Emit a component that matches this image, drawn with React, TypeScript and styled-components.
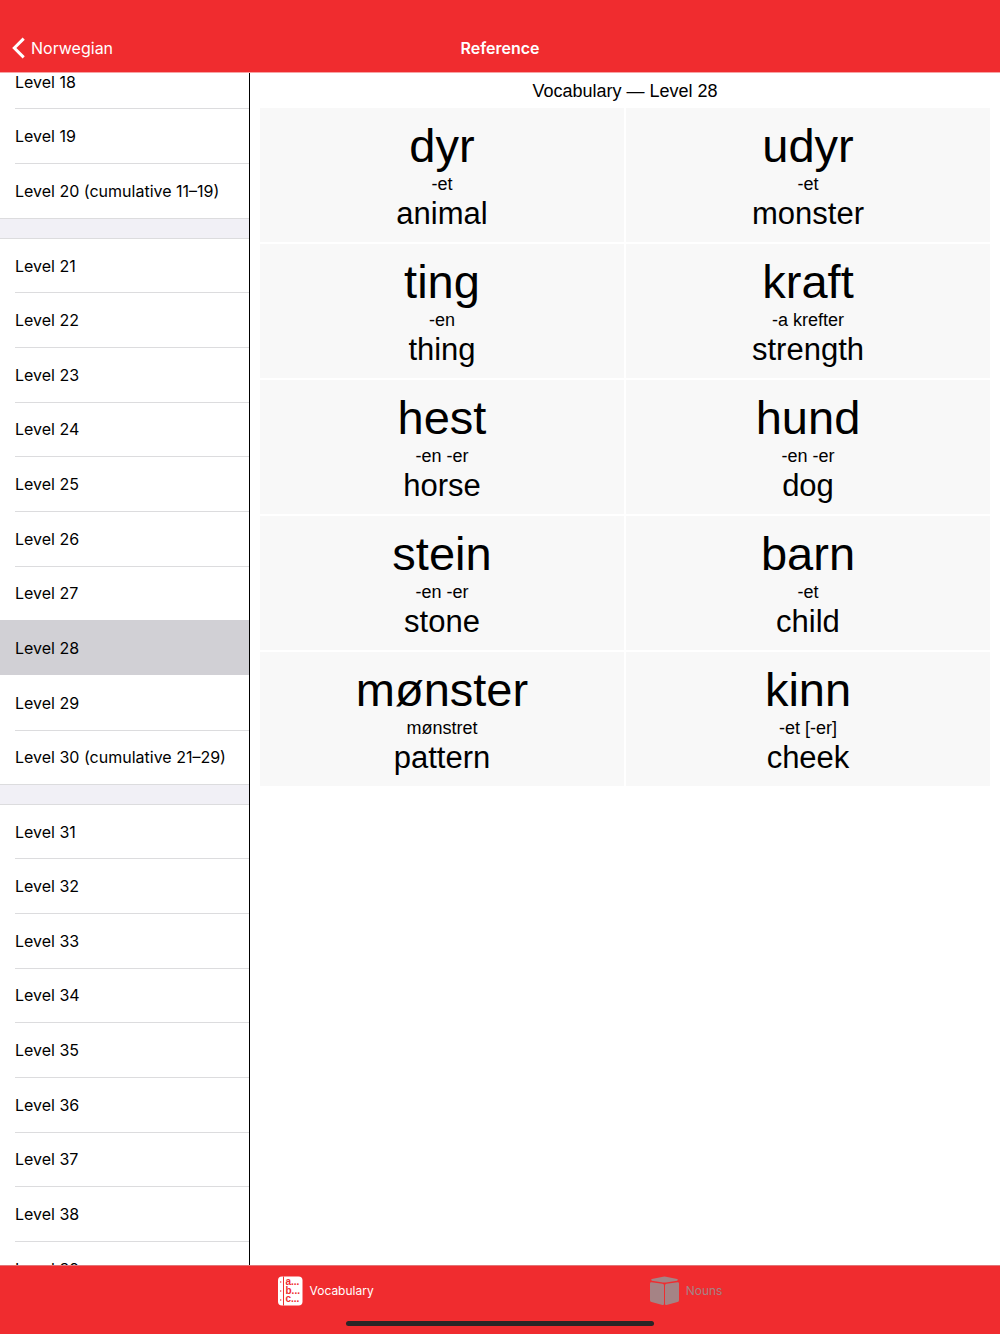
import React, { useLayoutEffect, useRef, useState } from 'react';
import styled, { createGlobalStyle } from 'styled-components';

const GlobalStyle = createGlobalStyle`
  *, *::before, *::after { box-sizing: border-box; }
  body { margin: 0; background: #fff; color: #000; }
`;

const uiFont = 'Inter, "Liberation Sans", sans-serif';
const wordFont = '"Liberation Sans", Arial, sans-serif';
const red = '#f02c2f';
const line = '#dcdcde';

const Page = styled.div`
  display: flex;
  flex-direction: column;
  height: 100vh;
  font-family: ${uiFont};
`;

const TopBar = styled.header`
  display: grid;
  grid-template-columns: 1fr auto 1fr;
  align-items: center;
  flex: none;
  padding: 24px 12px 0;
  height: 72px;
  background: ${red};
  color: #fff;
`;

const BackLink = styled.a`
  display: flex;
  align-items: center;
  gap: 6px;
  justify-self: start;
  color: inherit;
  font-size: 16px;
  line-height: 24px;
  text-decoration: none;
`;

const Title = styled.h1`
  margin: 0;
  font-size: 16px;
  font-weight: 600;
  line-height: 24px;
`;

const Body = styled.div`
  display: flex;
  flex: 1;
  min-height: 0;
  border-top: 1px solid #f8a3a4;
`;

const Sidebar = styled.nav`
  flex: none;
  width: 25%;
  overflow-y: auto;
  scrollbar-width: none;
  border-right: 1px solid #000;
`;

const LevelGroup = styled.ul`
  margin: 0;
  padding: 0;
  list-style: none;

  & + & {
    padding-top: 19px;
    border-top: 1px solid ${line};
    background: #f1f0f6;
  }
`;

const LevelItem = styled.li`
  height: 55px;

  &:nth-child(3n + 1) {
    height: 54px;
  }

  &:first-child {
    border-top: 1px solid ${line};
  }
`;

const LevelButton = styled.button<{ $selected: boolean }>`
  display: flex;
  width: 100%;
  height: 100%;
  padding: 0 0 0 15px;
  border: 0;
  background: ${(p) => (p.$selected ? '#d1d0d5' : '#fff')};
  color: #000;
  font-family: inherit;
  font-size: 16px;
  line-height: 24px;
  text-align: left;
  cursor: pointer;
`;

const LevelLabel = styled.span<{ $line: boolean }>`
  display: flex;
  align-items: center;
  flex: 1;
  padding-bottom: 1px;
  border-top: 1px solid ${(p) => (p.$line ? line : 'transparent')};
`;

const Content = styled.main`
  flex: 1;
  min-width: 0;
  overflow-y: auto;
  padding: 0 10px;
  font-family: ${wordFont};
  text-align: center;
`;

const Heading = styled.h2`
  margin: 0;
  padding-top: 1px;
  font-size: 18px;
  font-weight: 400;
  line-height: 34px;
`;

const WordGrid = styled.div`
  display: grid;
  grid-template-columns: 1fr 1fr;
  gap: 2px;
`;

const Card = styled.article`
  padding: 10px;
  background: #f8f8f8;
`;

const Word = styled.h3`
  margin: 0;
  font-size: 47px;
  font-weight: 400;
  line-height: 55px;
`;

const Inflection = styled.p`
  margin: 0;
  font-size: 18px;
  line-height: 22px;
`;

const Meaning = styled.p`
  margin: 0;
  font-size: 31px;
  line-height: 37px;
`;

const TabBar = styled.footer`
  display: flex;
  flex-direction: column;
  align-items: center;
  justify-content: space-between;
  flex: none;
  height: 69px;
  padding: 9px 0 8px;
  border-top: 1px solid #e27477;
  background: ${red};
`;

const Tabs = styled.nav`
  display: flex;
  gap: 276px;
`;

const Tab = styled.button<{ $active: boolean }>`
  display: flex;
  align-items: center;
  gap: 7px;
  padding: 0;
  border: 0;
  background: none;
  color: ${(p) => (p.$active ? '#fff' : '#a58385')};
  font-family: inherit;
  font-size: 12px;
  line-height: 32px;
  cursor: pointer;
`;

const HomeIndicator = styled.div`
  width: 308px;
  height: 5px;
  border-radius: 3px;
  background: #2a2526;
`;

const BackIcon = () => (
  <svg width="13" height="22" viewBox="0 0 13 22" fill="none" stroke="currentColor" strokeWidth="3" aria-hidden="true">
    <path d="M11.7 1.6 2.3 11l9.4 9.4" />
  </svg>
);

const VocabularyIcon = () => (
  <svg width="25" height="30" viewBox="0 0 25 30" aria-hidden="true">
    <rect x="0" y="0.5" width="24.5" height="29" rx="4" fill="#fff" />
    <g fill={red}>
      <rect x="5" y="0.5" width="1" height="29" />
      <circle cx="2.7" cy="6" r="0.7" />
      <circle cx="2.7" cy="15" r="0.7" />
      <circle cx="2.7" cy="24" r="0.7" />
      <g fontFamily="Liberation Sans" fontSize="10" fontWeight="700">
        <text x="7.5" y="9">a...</text>
        <text x="7.5" y="17.5">b...</text>
        <text x="7.5" y="26">c...</text>
      </g>
    </g>
  </svg>
);

const NounsIcon = () => (
  <svg width="29" height="30" viewBox="0 0 29 30" fill="currentColor" aria-hidden="true">
    <path d="M1.8 3 13 .7q1.5-.3 3 0L27.2 3q1.4.8 0 1.7L16 6.4q-1.5.2-3 0L1.8 4.7q-1.4-.9 0-1.7Z" />
    <path d="M1.5 6.2 12.5 7.7q1.5.2 1.5 1.7v18.4q0 1.5-1.5 1.2L1.5 26Q0 25.6 0 24.2V7.6Q0 6 1.5 6.2Z" />
    <path d="M27.5 6.2 16.5 7.7q-1.5.2-1.5 1.7v18.4q0 1.5 1.5 1.2L27.5 26q1.5-.4 1.5-1.8V7.6q0-1.6-1.5-1.4Z" />
  </svg>
);

const range = (from: number, to: number) => Array.from({ length: to - from + 1 }, (_, i) => from + i);
const groups = [range(18, 20), range(21, 30), range(31, 39)];

const levelName = (n: number) =>
  n % 10 === 0 ? `Level ${n} (cumulative ${n - 9}–${n - 1})` : `Level ${n}`;

const words = [
  ['dyr', '-et', 'animal'],
  ['udyr', '-et', 'monster'],
  ['ting', '-en', 'thing'],
  ['kraft', '-a krefter', 'strength'],
  ['hest', '-en -er', 'horse'],
  ['hund', '-en -er', 'dog'],
  ['stein', '-en -er', 'stone'],
  ['barn', '-et', 'child'],
  ['mønster', 'mønstret', 'pattern'],
  ['kinn', '-et [-er]', 'cheek'],
];

export default function App() {
  const [level, setLevel] = useState(28);
  const [tab, setTab] = useState('Vocabulary');
  const sidebar = useRef<HTMLElement>(null);

  useLayoutEffect(() => {
    if (sidebar.current) sidebar.current.scrollTop = 19;
  }, []);

  return (
    <Page>
      <GlobalStyle />
      <TopBar>
        <BackLink href="#norwegian"><BackIcon />Norwegian</BackLink>
        <Title>Reference</Title>
      </TopBar>
      <Body>
        <Sidebar ref={sidebar} aria-label="Levels">
          {groups.map((group) => (
            <LevelGroup key={group[0]}>
              {group.map((n) => (
                <LevelItem key={n}>
                  <LevelButton $selected={n === level} onClick={() => setLevel(n)}>
                    <LevelLabel $line={n !== level && n !== level + 1 && n !== group[0]}>{levelName(n)}</LevelLabel>
                  </LevelButton>
                </LevelItem>
              ))}
            </LevelGroup>
          ))}
        </Sidebar>
        <Content>
          <Heading>{tab} — Level {level}</Heading>
          <WordGrid>
            {words.map(([word, inflection, meaning]) => (
              <Card key={word}>
                <Word lang="no">{word}</Word>
                <Inflection lang="no">{inflection}</Inflection>
                <Meaning>{meaning}</Meaning>
              </Card>
            ))}
          </WordGrid>
        </Content>
      </Body>
      <TabBar>
        <Tabs aria-label="Sections">
          <Tab $active={tab === 'Vocabulary'} onClick={() => setTab('Vocabulary')}><VocabularyIcon />Vocabulary</Tab>
          <Tab $active={tab === 'Nouns'} onClick={() => setTab('Nouns')}><NounsIcon />Nouns</Tab>
        </Tabs>
        <HomeIndicator />
      </TabBar>
    </Page>
  );
}
